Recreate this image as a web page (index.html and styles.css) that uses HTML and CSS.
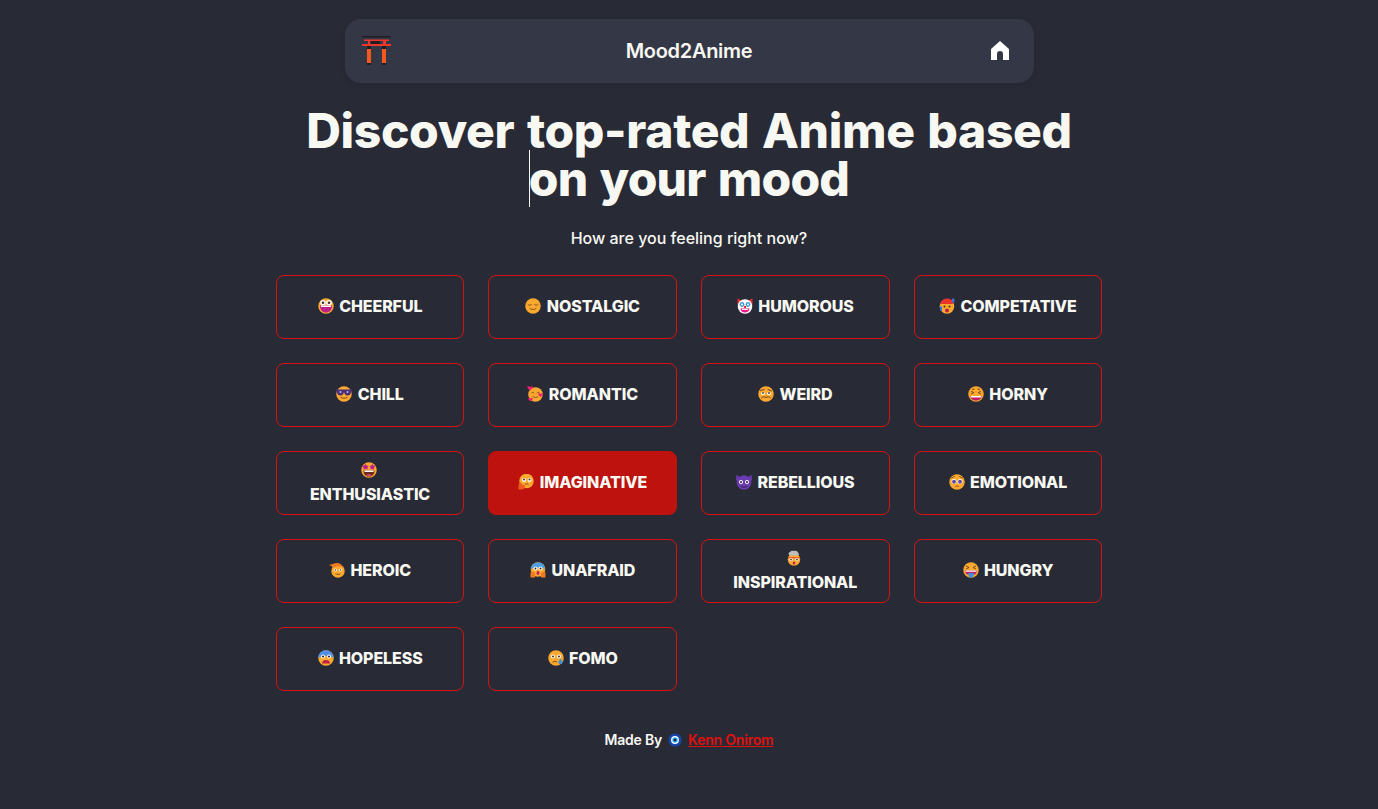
FILE: index.html

```html
<!DOCTYPE html>
<html lang="en">
<head>
    <meta charset="UTF-8">
    <title>Mood2Anime</title>
    <link rel="stylesheet" href="styles.css">
</head>
<body>
<svg class="defs" width="0" height="0">
    <symbol id="e-cheerful" viewBox="0 0 32 32"><circle cx="16" cy="16" r="15.500" fill="#fba82e"/><circle cx="10" cy="9.500" r="5.500" fill="#fff"/><circle cx="22" cy="9.500" r="5.500" fill="#fff"/><circle cx="10" cy="9.500" r="2.600" fill="#4a2f27"/><circle cx="22" cy="9.500" r="2.600" fill="#4a2f27"/><path d="M4 15h24c0 9-5 14-12 14S4 24 4 15z" fill="#bd1f8c"/><path d="M6 15h20v3H6z" fill="#fff"/></symbol>
    <symbol id="e-nostalgic" viewBox="0 0 32 32"><circle cx="16" cy="16" r="15.500" fill="#fba82e"/><path d="M6 13c2 2 5 2 7 0M19 13c2 2 5 2 7 0M10 21c3 3 9 3 12 0" fill="none" stroke="#6b3f1d" stroke-width="1.600" stroke-linecap="round"/></symbol>
    <symbol id="e-humorous" viewBox="0 0 32 32"><path d="M1 1l7 3h16l7-3v12H1z" fill="#e02c2c"/><circle cx="16" cy="17" r="14.500" fill="#fff"/><circle cx="10" cy="13" r="4.800" fill="#3f9ad6"/><circle cx="22" cy="13" r="4.800" fill="#3f9ad6"/><circle cx="10" cy="13" r="2.200" fill="#fff"/><circle cx="22" cy="13" r="2.200" fill="#fff"/><circle cx="16" cy="18" r="2.400" fill="#e02c2c"/><path d="M7 21h18c0 5-4 8-9 8s-9-3-9-8z" fill="#f0148c"/><path d="M10 22h12v2H10z" fill="#fff"/></symbol>
    <symbol id="e-competative" viewBox="0 0 32 32"><circle cx="16" cy="17" r="14.500" fill="#fba82e"/><path d="M2 14C3 5 10 1 17 1c5 0 9 2 11 6v5H2z" fill="#e8322a"/><path d="M26 1h5v8h-5z" fill="#3c6fe0"/><path d="M1 17h5v9H3z" fill="#3c6fe0"/><circle cx="11" cy="17" r="2" fill="#4a2f27"/><circle cx="21" cy="17" r="2" fill="#4a2f27"/><ellipse cx="16" cy="25" rx="4" ry="4" fill="#bd1f4c"/></symbol>
    <symbol id="e-chill" viewBox="0 0 32 32"><circle cx="16" cy="16" r="15.500" fill="#fba82e"/><path d="M0 7h32v4h-2c0 6-3 8-7 8s-6-3-7-7c-1 4-3 7-7 7s-7-2-7-8H0z" fill="#4b2f78"/><circle cx="9" cy="12" r="2" fill="#c7b6e6"/><circle cx="23" cy="12" r="2" fill="#c7b6e6"/><path d="M10 23c3 2 9 2 12 0" fill="none" stroke="#6b3f1d" stroke-width="1.800" stroke-linecap="round"/></symbol>
    <symbol id="e-romantic" viewBox="0 0 32 32"><circle cx="17" cy="17" r="14.500" fill="#fba82e"/><path d="M9 14c1-2 4-2 5 0M20 14c1-2 4-2 5 0M12 21c3 3 7 3 10 0" fill="none" stroke="#6b3f1d" stroke-width="1.600" stroke-linecap="round"/><path d="M6 9L1 4c-2-3 2-5 5-2 3-3 7-1 5 2z" fill="#f01f78"/><path d="M27 22l-4-4c-2-2 2-5 4-2 2-3 6 0 4 2z" fill="#f01f78"/><path d="M7 31l-4-4c-2-2 2-5 4-2 2-3 6 0 4 2z" fill="#f01f78"/></symbol>
    <symbol id="e-weird" viewBox="0 0 32 32"><circle cx="16" cy="16" r="15.500" fill="#fba82e"/><circle cx="10" cy="15" r="3.600" fill="#fff"/><circle cx="22" cy="15" r="3.600" fill="#fff"/><circle cx="10" cy="14" r="1.800" fill="#4a2f27"/><circle cx="22" cy="14" r="1.800" fill="#4a2f27"/><path d="M5 9l7-2M20 7l7 3M7 24c3-3 5-3 9-1 4-2 6-2 9 1" fill="none" stroke="#5a3318" stroke-width="1.800" stroke-linecap="round"/></symbol>
    <symbol id="e-horny" viewBox="0 0 32 32"><circle cx="16" cy="16" r="15.500" fill="#fba82e"/><path d="M6 11l6 2-6 3M26 11l-6 2 6 3M8 7l5-1M24 7l-5-1" fill="none" stroke="#6b3f1d" stroke-width="1.800"/><path d="M5 20h22c0 6-5 9-11 9S5 26 5 20z" fill="#bd1f6c"/><path d="M6 20h20v3H6z" fill="#fff"/></symbol>
    <symbol id="e-enthusiastic" viewBox="0 0 32 32"><circle cx="16" cy="16" r="15.500" fill="#fba82e"/><path d="M9 4l2 3 4 1-2 3 0 4-4-1-4 1 0-4-3-3 4-1zM23 4l2 3 4 1-3 3 0 4-3-1-4 1 0-4-2-3 4-1z" fill="#bd1f8c"/><path d="M5 17h22c0 8-5 12-11 12S5 25 5 17z" fill="#6b2a1d"/><path d="M7 17h18v3H7z" fill="#fff"/><path d="M10 26c3-2 9-2 12 0-3 3-9 3-12 0z" fill="#e8457a"/></symbol>
    <symbol id="e-imaginative" viewBox="0 0 32 32"><circle cx="17" cy="14" r="14.500" fill="#fba82e"/><circle cx="12" cy="12" r="4" fill="#fff"/><circle cx="23" cy="12" r="4" fill="#fff"/><circle cx="12" cy="11" r="2" fill="#4a2f27"/><circle cx="23" cy="11" r="2" fill="#4a2f27"/><path d="M14 21c2-2 5-2 7 0" fill="none" stroke="#6b3f1d" stroke-width="1.800"/><path d="M1 31v-9c0-3 3-5 5-5l2 4 5 1c2 3 0 9-4 9z" fill="#ef5a1f"/></symbol>
    <symbol id="e-rebellious" viewBox="0 0 32 32"><path d="M1 1l9 7h12l9-7 1 12H0z" fill="#6b3bb0"/><circle cx="16" cy="17" r="14.500" fill="#6b3bb0"/><circle cx="10" cy="16" r="4" fill="#fff"/><circle cx="22" cy="16" r="4" fill="#fff"/><circle cx="10" cy="16" r="2" fill="#2c1a4a"/><circle cx="22" cy="16" r="2" fill="#2c1a4a"/><path d="M10 25c3 2 9 2 12 0" fill="none" stroke="#2c1a4a" stroke-width="1.800" stroke-linecap="round"/></symbol>
    <symbol id="e-emotional" viewBox="0 0 32 32"><circle cx="16" cy="16" r="15.500" fill="#fba82e"/><circle cx="10" cy="15" r="5" fill="#fff"/><circle cx="22" cy="15" r="5" fill="#fff"/><circle cx="10" cy="15.500" r="3.800" fill="#5b4a9c"/><circle cx="22" cy="15.500" r="3.800" fill="#5b4a9c"/><path d="M5 8l6-3M27 8l-6-3M13 25c2-1.500 4-1.500 6 0" fill="none" stroke="#6b3f1d" stroke-width="1.600" stroke-linecap="round"/></symbol>
    <symbol id="e-heroic" viewBox="0 0 32 32"><circle cx="18" cy="18" r="13.500" fill="#fba82e"/><path d="M0 6l14-4c7-1 12 3 14 9-5-3-12-3-18-1L8 12 5 8z" fill="#ef7a1f"/><circle cx="13" cy="16" r="3" fill="#fff"/><circle cx="23" cy="16" r="3" fill="#fff"/><circle cx="13" cy="16" r="1.500" fill="#4a2f27"/><circle cx="23" cy="16" r="1.500" fill="#4a2f27"/><path d="M14 24c2 1.500 6 1.500 8 0" fill="none" stroke="#6b3f1d" stroke-width="1.600" stroke-linecap="round"/></symbol>
    <symbol id="e-unafraid" viewBox="0 0 32 32"><circle cx="16" cy="15" r="14.500" fill="#fba82e"/><path d="M2 15C2 6 8 1 16 1s14 5 14 14c-3-3-7-4-14-4S5 12 2 15z" fill="#4b9fe8"/><circle cx="11" cy="13" r="4" fill="#fff"/><circle cx="21" cy="13" r="4" fill="#fff"/><circle cx="11" cy="13" r="1.800" fill="#2c1a1a"/><circle cx="21" cy="13" r="1.800" fill="#2c1a1a"/><ellipse cx="16" cy="22" rx="3" ry="4" fill="#bd1f6c"/><path d="M1 31v-9c0-3 7-3 9 0v9zM31 31v-9c0-3-7-3-9 0v9z" fill="#ef7a1f"/></symbol>
    <symbol id="e-inspirational" viewBox="0 0 32 32"><circle cx="16" cy="19" r="12.500" fill="#fba82e"/><path d="M8 11c-4-1-4-6 0-7 2-3 6-3 8-2 3-1 7 0 8 3 3 2 2 6-1 6z" fill="#bdbdbd"/><path d="M4 14h24v3H4z" fill="#ef5a1f"/><circle cx="10" cy="19" r="3.500" fill="#fff"/><circle cx="22" cy="19" r="3.500" fill="#fff"/><circle cx="10" cy="19" r="1.800" fill="#4a2f27"/><circle cx="22" cy="19" r="1.800" fill="#4a2f27"/><ellipse cx="16" cy="26" rx="2.500" ry="3" fill="#bd1f4c"/></symbol>
    <symbol id="e-hungry" viewBox="0 0 32 32"><circle cx="16" cy="16" r="15.500" fill="#fba82e"/><path d="M6 8l6 3-6 3M26 8l-6 3 6 3" fill="none" stroke="#6b3f1d" stroke-width="1.800"/><path d="M4 17h24c0 3-2 6-4 8H8c-2-2-4-5-4-8z" fill="#bd1f6c"/><path d="M5 17h22v2.500H5z" fill="#fff"/><path d="M11 22h10v5c0 3-3 4-5 4s-5-1-5-4z" fill="#3c8fe0"/></symbol>
    <symbol id="e-hopeless" viewBox="0 0 32 32"><circle cx="16" cy="16" r="15.500" fill="#fba82e"/><path d="M.5 16C.5 7 8 .5 16 .5S31.500 7 31.500 16c-4-3-9-4-15.500-4S4.500 13 .5 16z" fill="#4f8fe8"/><circle cx="10" cy="13" r="4" fill="#fff"/><circle cx="22" cy="13" r="4" fill="#fff"/><circle cx="10" cy="13" r="2" fill="#2c1a1a"/><circle cx="22" cy="13" r="2" fill="#2c1a1a"/><path d="M8 27c0-5 4-7 8-7s8 2 8 7z" fill="#bd1f4c"/></symbol>
    <symbol id="e-fomo" viewBox="0 0 32 32"><circle cx="16" cy="16" r="15.500" fill="#fba82e"/><circle cx="10" cy="13" r="4" fill="#fff"/><circle cx="22" cy="13" r="4" fill="#fff"/><circle cx="10" cy="13" r="2" fill="#4a2f27"/><circle cx="22" cy="13" r="2" fill="#4a2f27"/><path d="M10 24c3-2 6-2 8 0" fill="none" stroke="#6b3f1d" stroke-width="1.800" stroke-linecap="round"/><path d="M25 17c2 3 4 5 4 8 0 2-2 3-4 3s-4-1-4-3c0-3 2-5 4-8z" fill="#3c8fe0"/></symbol>
</svg>

<div class="page">
    <nav class="nav">
        <svg class="torii" viewBox="0 0 32 32">
            <path d="M2 1h29v1.500H2zM11 6h9v3h-9zM7 11h4v3H7zM22 11h4v3h-4zM7 28h4v2H7zM22 28h4v2h-4z" fill="#1f1f23"/>
            <path d="M4 4.500h25V6H4zM8 6h2v3H8zM23 6h3v3h-3zM2 9h29v2H2z" fill="#f0362a"/>
            <path d="M7 14h4v14H7zM22 14h4v14h-4z" fill="#f4581f"/>
        </svg>
        <span class="logo">Mood2Anime</span>
        <svg class="home" viewBox="0 0 24 24"><path d="M12 2l9 8v11h-6v-6a3 3 0 0 0-6 0v6H3V10z" fill="#fff"/></svg>
    </nav>

    <h1 class="title">Discover top-rated Anime based <span class="typed">on your mood</span></h1>
    <p class="sub">How are you feeling right now?</p>

    <div class="moods">
        <button class="mood"><svg class="emoji"><use href="#e-cheerful"/></svg> CHEERFUL</button>
        <button class="mood"><svg class="emoji"><use href="#e-nostalgic"/></svg> NOSTALGIC</button>
        <button class="mood"><svg class="emoji"><use href="#e-humorous"/></svg> HUMOROUS</button>
        <button class="mood"><svg class="emoji"><use href="#e-competative"/></svg> COMPETATIVE</button>
        <button class="mood"><svg class="emoji"><use href="#e-chill"/></svg> CHILL</button>
        <button class="mood"><svg class="emoji"><use href="#e-romantic"/></svg> ROMANTIC</button>
        <button class="mood"><svg class="emoji"><use href="#e-weird"/></svg> WEIRD</button>
        <button class="mood"><svg class="emoji"><use href="#e-horny"/></svg> HORNY</button>
        <button class="mood"><svg class="emoji"><use href="#e-enthusiastic"/></svg> ENTHUSIASTIC</button>
        <button class="mood active"><svg class="emoji"><use href="#e-imaginative"/></svg> IMAGINATIVE</button>
        <button class="mood"><svg class="emoji"><use href="#e-rebellious"/></svg> REBELLIOUS</button>
        <button class="mood"><svg class="emoji"><use href="#e-emotional"/></svg> EMOTIONAL</button>
        <button class="mood"><svg class="emoji"><use href="#e-heroic"/></svg> HEROIC</button>
        <button class="mood"><svg class="emoji"><use href="#e-unafraid"/></svg> UNAFRAID</button>
        <button class="mood"><svg class="emoji"><use href="#e-inspirational"/></svg> INSPIRATIONAL</button>
        <button class="mood"><svg class="emoji"><use href="#e-hungry"/></svg> HUNGRY</button>
        <button class="mood"><svg class="emoji"><use href="#e-hopeless"/></svg> HOPELESS</button>
        <button class="mood"><svg class="emoji"><use href="#e-fomo"/></svg> FOMO</button>
    </div>

    <footer class="footer">
        <span>Made By</span>
        <svg class="nazar" viewBox="0 0 16 16">
            <circle cx="8" cy="8" r="7.500" fill="#1646a8"/>
            <circle cx="8" cy="8" r="4.500" fill="#fff"/>
            <circle cx="8" cy="8" r="3.200" fill="#3fb4f0"/>
            <circle cx="8" cy="8" r="1.600" fill="#14213d"/>
        </svg>
        <a class="author" href="#">Kenn Onirom</a>
    </footer>
</div>
</body>
</html>
```

FILE: styles.css

```css
* {
    padding: 0;
    margin: 0;
    box-sizing: border-box;
}

body {
    background: #282a36;
    color: #f8f8f2;
    font-family: "Inter", "Noto Sans", sans-serif;
    height: 809px;
    overflow: hidden;
}

.defs {
    position: absolute;
}

.page {
    display: flex;
    flex-direction: column;
    align-items: center;
    padding-top: 19px;
}

.nav {
    width: 689px;
    height: 64px;
    background: #343746;
    border-radius: 16px;
    display: flex;
    align-items: center;
    justify-content: space-between;
    padding: 0 21px 0 15px;
    box-shadow: 0 2px 6px rgba(0, 0, 0, 0.08);
}

.torii {
    width: 32px;
    height: 32px;
}

.home {
    width: 24px;
    height: 24px;
}

.logo {
    font-size: 20px;
    font-weight: 600;
    letter-spacing: -0.3px;
    margin-right: 2px;
}

.title {
    width: 800px;
    margin-top: 24px;
    font-size: 48px;
    line-height: 48px;
    font-weight: 800;
    text-align: center;
    letter-spacing: -0.35px;
    word-spacing: 2.5px;
}

.typed {
    position: relative;
    letter-spacing: -0.8px;
}

.typed::before {
    content: "";
    position: absolute;
    left: 0;
    top: 1px;
    width: 1px;
    height: 57px;
    background: #f8f8f2;
}

.sub {
    margin-top: 23px;
    font-size: 16px;
    line-height: 24px;
    font-weight: 500;
}

.moods {
    width: 826.5px;
    margin-top: 25px;
    display: grid;
    grid-template-columns: repeat(4, 1fr);
    gap: 24px;
}

.mood {
    height: 64px;
    padding: 0 23px 2px;
    background: transparent;
    border: 1px solid #d8130f;
    border-radius: 8px;
    color: #f8f8f2;
    font-family: inherit;
    font-size: 16px;
    line-height: 24px;
    font-weight: 800;
    letter-spacing: -0.1px;
    text-align: center;
    cursor: pointer;
}

.mood.active {
    background: #bd120e;
    border-color: #bd120e;
}

.emoji {
    display: inline-block;
    width: 16px;
    height: 16px;
    margin-right: 2px;
    vertical-align: -2px;
}

.footer {
    margin-top: 37px;
    display: flex;
    align-items: center;
    gap: 6px;
    font-size: 14px;
    line-height: 24px;
    font-weight: 600;
    letter-spacing: -0.2px;
}

.nazar {
    width: 14px;
    height: 14px;
}

.author {
    color: #e0110d;
}
```
